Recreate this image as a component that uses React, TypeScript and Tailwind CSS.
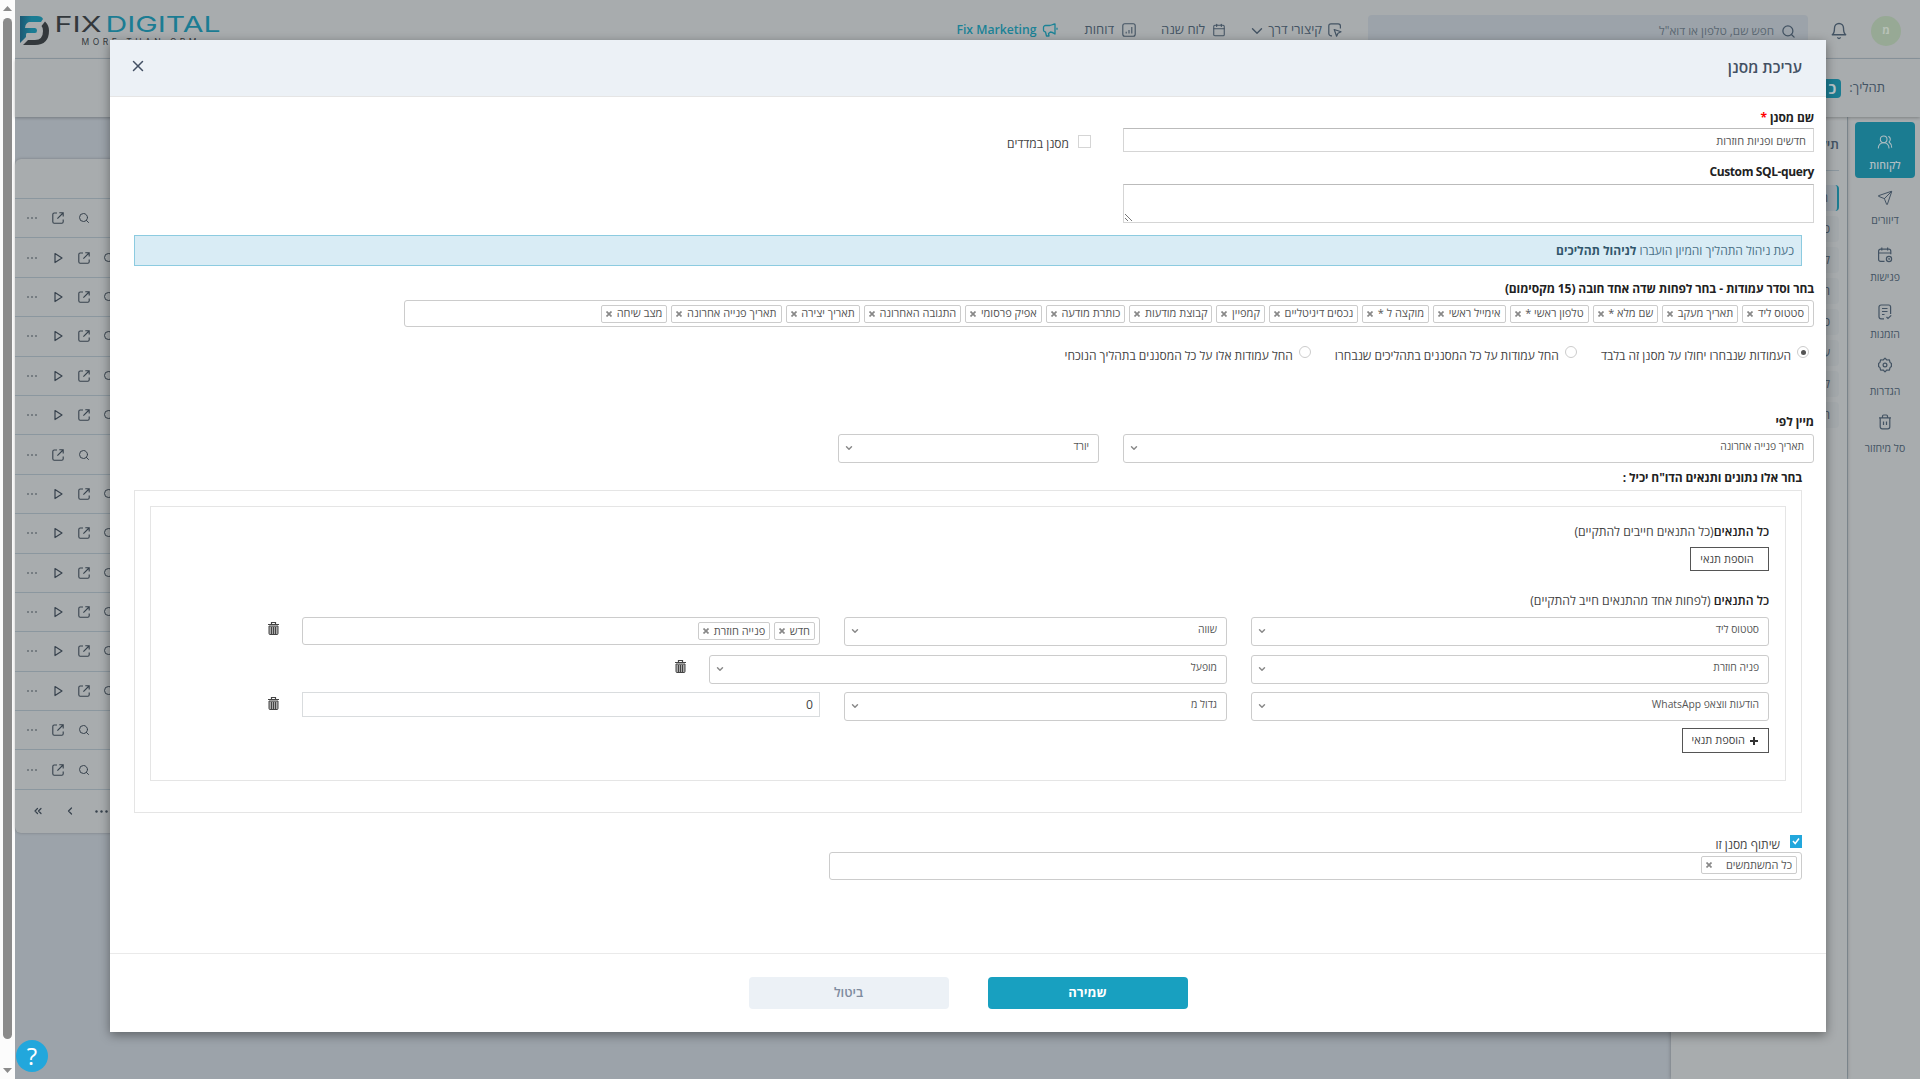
import clsx from "clsx";
import {
  LuBell,
  LuCalendar,
  LuChevronDown,
  LuChevronLeft,
  LuChevronsLeft,
  LuPlay,
  LuSearch,
  LuSend,
  LuUsersRound,
  LuX,
} from "react-icons/lu";

const columns = [
  "סטטוס ליד",
  "תאריך מעקב",
  "שם מלא *",
  "טלפון ראשי *",
  "אימייל ראשי",
  "מוקצה ל *",
  "נכסים דיגיטליים",
  "קמפיין",
  "קבוצת מודעות",
  "כותרת מודעה",
  "אפיק פרסומי",
  "התגובה האחרונה",
  "תאריך יצירה",
  "תאריך פנייה אחרונה",
  "מצב שיחה",
];

const rows = [false, true, true, true, true, true, false, true, true, true, true, true, true, false, false];

const stages = ["ח", "כ", "ל", "ח", "כ", "ע", "ל", "ח"];

function ExternalIcon() {
  return (
    <svg viewBox="0 0 12 12" className="size-3 shrink-0" fill="none" stroke="currentColor" strokeWidth="1.1">
      <path d="M5 1H2.2A1.4 1.4 0 0 0 .8 2.400V9.800A1.400 1.400 0 0 0 2.200 11.200H9.800A1.400 1.400 0 0 0 11.200 9.800V7.400M7.300.8h3.900v3.600M11 1 5.400 6.600" />
    </svg>
  );
}

function ChartIcon() {
  return (
    <svg viewBox="0 0 14 14" className="size-[14px]" fill="none" stroke="currentColor" strokeWidth="1.1">
      <rect x="0.800" y="0.800" width="12.400" height="12.400" rx="2" />
      <path d="M4.200 10.500V8.800M7 10.500V7M9.800 10.500V4" />
    </svg>
  );
}

function ShortcutIcon() {
  return (
    <svg viewBox="0 0 14 14" className="size-[14px]" fill="none" stroke="currentColor" strokeWidth="1.200" strokeLinejoin="round">
      <path d="M4 12.800H3a2.200 2.200 0 0 1-2.200-2.200V3A2.200 2.200 0 0 1 3 .8h7.200A2.200 2.200 0 0 1 12.400 3v2.500" />
      <path d="m6.200 6.500 6.800 2.200-3 1.500-1.400 3z" />
    </svg>
  );
}

function HornIcon() {
  return (
    <svg viewBox="0 0 16 14" className="h-[14px] w-4" fill="none" stroke="currentColor" strokeWidth="1.300" strokeLinejoin="round">
      <path d="M13 1v10C11 9.500 10.500 9 8.500 9L6.500 10.500 7 13H4.500L3.500 9A2 2 0 0 1 1.500 7V4.500a2 2 0 0 1 2-2h4C9.500 2.500 11 1 13 1zM15 4.800v2" />
    </svg>
  );
}

function MeetingIcon() {
  return (
    <svg viewBox="0 0 16 16" className="size-4" fill="none" stroke="currentColor" strokeWidth="1.200">
      <path d="M7.500 14.400H3.600a2 2 0 0 1-2-2V4.200a2 2 0 0 1 2-2h8.200a2 2 0 0 1 2 2v3M1.600 6h12.200M4.800.6v3M10.600.6v3" />
      <circle cx="12" cy="12" r="2.600" />
      <path d="M12 11v1.200h.8" />
    </svg>
  );
}

function OrdersIcon() {
  return (
    <svg viewBox="0 0 16 16" className="size-4" fill="none" stroke="currentColor" strokeWidth="1.200">
      <path d="M7 14.800H4a2 2 0 0 1-2-2V3a2 2 0 0 1 2-2h7.600a2 2 0 0 1 2 2v7M5 4.500h5.500M5 7.500h5.500M5 10.500h2.500M9.500 13l1.500 1.500 3.200-3.200" />
    </svg>
  );
}

function SettingsIcon() {
  return (
    <svg viewBox="0 0 16 16" className="size-4" fill="none" stroke="currentColor" strokeWidth="1.200" strokeLinejoin="round">
      <path d="M8 1.200 9.800 3 12.400 2.800 13 5.400 14.400 6.500V9.500L13 10.600 12.400 13.200 9.800 13 8 14.800 6.200 13 3.600 13.200 3 10.600 1.600 9.500V6.500L3 5.400 3.600 2.800 6.200 3z" />
      <circle cx="8" cy="8" r="1.900" />
    </svg>
  );
}

function BinIcon() {
  return (
    <svg viewBox="0 0 16 16" className="size-4" fill="none" stroke="currentColor" strokeWidth="1.200">
      <path d="M2 3.800h12M3.200 3.800v9a2 2 0 0 0 2 2h5.600a2 2 0 0 0 2-2v-9M5.500 3.600V2.200A1.200 1.200 0 0 1 6.700 1h2.600a1.200 1.200 0 0 1 1.200 1.200v1.400M6.500 7.500v3.500M9.500 7.500v3.500" />
    </svg>
  );
}

const menu = [
  { label: "דיוורים", icon: <LuSend className="size-4" strokeWidth={1.5} /> },
  { label: "פגישות", icon: <MeetingIcon /> },
  { label: "הזמנות", icon: <OrdersIcon /> },
  { label: "הגדרות", icon: <SettingsIcon />, raised: true },
  { label: "סל מיחזור", icon: <BinIcon />, raised: true },
];

function Logo() {
  return (
    <svg width="210" height="32" viewBox="0 0 210 32" direction="ltr" className="overflow-visible">
      <defs>
        <linearGradient id="mark" x1="0" x2="1">
          <stop offset="0" stopColor="#1c5873" />
          <stop offset="0.500" stopColor="#1b7c93" />
        </linearGradient>
      </defs>
      <path d="M0 0h17q5 0 6 3l-2 3H9.500Q7 6 5.500 9.500L5 12h10q2 0 2 2.500T15 17H7q-1 0-1 2v2L0 27z" fill="url(#mark)" />
      <path d="M25 5.500q4 4 4 9 0 14.500-14 14.500H3l5-5h7q8 0 8-9 0-3.500-1.500-5z" fill="#33383c" />
      <text x="34.500" y="16" textLength="47" lengthAdjust="spacingAndGlyphs" fontFamily="Inter" fontSize="22" fill="#33383c">FIX</text>
      <text x="85.500" y="16" textLength="115" lengthAdjust="spacingAndGlyphs" fontFamily="Inter" fontSize="22" fill="#1b7c93">DIGITAL</text>
      <text x="61.500" y="29" textLength="115" fontFamily="Inter" fontSize="8.500" fill="#33383c">MORE THAN CRM</text>
    </svg>
  );
}

function Tag({ text, wide }: { text: string; wide?: boolean }) {
  return (
    <span className={clsx("flex h-[18px] shrink-0 items-center rounded-[2px] border border-[#ccc] bg-white px-1 text-[11px] text-[#555]", wide ? "gap-[13.500px]" : "gap-[4.600px]")}>
      {text}
      <svg viewBox="0 0 6 6" className="size-[6px]" stroke="#888" strokeWidth="1.700">
        <path d="M.5.5l5 5M5.500.5l-5 5" />
      </svg>
    </span>
  );
}

function Select({ text, className }: { text: string; className?: string }) {
  return (
    <div className={clsx("flex h-[29px] items-center justify-between rounded-[3px] border border-[#ccc] bg-white pr-[9px] pl-[5px] pb-1 text-[10.300px] text-[#555]", className)}>
      <span>{text}</span>
      <LuChevronDown className="mt-[2px] size-[10px] text-[#888]" strokeWidth={3.4} />
    </div>
  );
}

function Radio({ text, checked, className }: { text: string; checked?: boolean; className?: string }) {
  return (
    <label className={clsx("flex shrink-0 gap-[6px]", className)}>
      <span className="flex size-3 items-center justify-center rounded-full border border-[#ccc]">
        {checked && <span className="size-[5px] rounded-full bg-[#555]" />}
      </span>
      <span className="leading-[19px]">{text}</span>
    </label>
  );
}

function Trash() {
  return (
    <svg viewBox="0 0 11 13" className="mr-[23px] mt-[5px] h-[13px] w-[11px] shrink-0" fill="none" stroke="#444">
      <path d="M3.500 2V.5h4V2M0 2.500h11" strokeWidth="1.200" />
      <path d="M1 4h9v7.500q0 1-1 1H2q-1 0-1-1zM3.500 5v7M5.500 5v7M7.500 5v7" strokeWidth="1" fill="#aaa" />
    </svg>
  );
}

function Background() {
  return (
    <div className="flex h-full flex-col bg-[#9ca3aa] text-[#435363]">
      <header className="flex h-[59px] shrink-0 border-b border-[#8b979f] bg-[#a8acae] text-[13px]">
        <div className="mr-[19px] flex items-center pt-[3px]">
          <span className="flex size-[30px] items-center justify-center rounded-full bg-[#97a995] text-[11px] font-bold text-[#b7c1b7]">מ</span>
          <LuBell className="mr-[23px] size-[18px]" strokeWidth={1.8} />
        </div>
        <div className="mt-[15px] mr-[22px] flex h-[32px] w-[440px] items-center rounded bg-[#9ca3aa] pr-3 text-[11.700px] text-[#5b6872]">
          <LuSearch className="ml-[7px] size-[15px] text-[#435363]" strokeWidth={2} />
          חפש שם, טלפון או דוא"ל
        </div>
        <nav className="mt-[15px] mr-[26px] flex h-[30px] items-center">
          <ShortcutIcon />
          <span className="mr-[6px]">קיצורי דרך</span>
          <LuChevronDown className="mt-[2px] mr-[2px] size-[18px]" strokeWidth={1.8} />
          <LuCalendar className="mr-[22px] size-[14px]" strokeWidth={1.8} />
          <span className="mr-[7px]">לוח שנה</span>
          <span className="mr-[25px]"><ChartIcon /></span>
          <span className="mr-[8px]">דוחות</span>
          <span className="mr-[26px] flex items-center gap-[6px] font-semibold text-[#1b8296]">
            <HornIcon />
            <span dir="ltr" className="text-[12.200px]">Fix Marketing</span>
          </span>
        </nav>
        <div className="mt-4 mr-auto ml-[5px] w-[210px]" dir="ltr"><Logo /></div>
      </header>
      <div className="relative flex h-[58px] shrink-0 items-center bg-[#a8acae] pr-[35px] text-[13px] shadow-[0_1px_3px_rgba(0,0,0,0.25)]">
        <span>תהליך:</span>
        <span className="mr-[8px] h-[19px] w-[60px] rounded bg-[#1b7c91] pr-[5px] text-[15px] font-bold leading-[18px] text-[#b5c3c8]">כ</span>
      </div>
      <div className="flex min-h-0 grow">
        <aside className="flex w-[73px] flex-col border-l border-[#8b979f] bg-[#a8acae] pt-[5px] pr-[5px] text-[10.500px]">
          <div className="flex h-14 w-[60px] flex-col items-center rounded bg-[#1b7c91] pt-3 font-semibold text-[#aebdc2]">
            <LuUsersRound className="size-4" strokeWidth={1.6} />
            <span className="mt-[7px] leading-4">לקוחות</span>
          </div>
          <div className="flex w-[60px] flex-col pt-3">
            {menu.map((item) => (
              <div key={item.label} className="flex h-[57px] flex-col items-center">
                <span className={item.raised ? "-mt-1 mb-1" : ""}>{item.icon}</span>
                <span className="mt-[6px] leading-4">{item.label}</span>
              </div>
            ))}
          </div>
        </aside>
        <aside className="w-[176px] bg-[#a8acae] pr-2 shadow-[0_0_4px_rgba(0,0,0,0.3)]">
          <div className="h-[54px] border-b border-[#8b979f] pt-[17px] text-[13px] font-semibold leading-[20px]">תיקיות</div>
          <div className="flex flex-col gap-[5px] pt-[14px] text-[12px]">
            {stages.map((name, i) => (
              <div key={i} className={clsx("h-[26px] rounded pr-[9px] leading-[26px]", i === 0 ? "border-r-2 border-[#1b7c91] bg-[#9ca3aa]" : "bg-[#a3a8ab]")}>
                {name}
              </div>
            ))}
          </div>
        </aside>
        <main className="grow pt-[42px]">
          <div className="h-[674px] rounded-md bg-[#a8acae] shadow-[0_0_3px_rgba(0,0,0,0.25)]" dir="ltr">
            <div className="h-10 border-b border-[#8b979f]" />
            {rows.map((play, i) => (
              <div key={i} className="flex h-[39.400px] items-center gap-[13px] border-b border-[#8b979f] pl-3 text-[#37424d] last-of-type:border-b-0">
                <svg viewBox="0 0 10 2" className="h-[2px] w-[10px]" fill="currentColor">
                  <circle cx="1" cy="1" r="0.800" /><circle cx="5" cy="1" r="0.800" /><circle cx="9" cy="1" r="0.800" />
                </svg>
                <span className="ml-[2px] flex items-center gap-[13.500px]">
                  {play && <LuPlay className="size-3" strokeWidth={2.4} />}
                  <ExternalIcon />
                  <LuSearch className="size-3" strokeWidth={2} />
                </span>
              </div>
            ))}
            <div className="flex h-[43px] items-center pl-[17px] text-[#37424d]">
              <LuChevronsLeft className="size-3" strokeWidth={2.400} />
              <LuChevronLeft className="ml-[20px] size-3" strokeWidth={2.400} />
              <svg viewBox="0 0 13 3" className="ml-[19px] h-[3px] w-[13px]" fill="currentColor">
                <circle cx="1.500" cy="1.500" r="1.200" /><circle cx="6.500" cy="1.500" r="1.200" /><circle cx="11.500" cy="1.500" r="1.200" />
              </svg>
            </div>
          </div>
        </main>
      </div>
    </div>
  );
}

function Conditions() {
  return (
    <div className="mt-[15px] mr-[15px] h-[275px] w-[1636px] border border-[#e5e5e5] pt-[14px] pr-4 text-[12.200px]">
      <div className="h-5 leading-[21px]"><span className="font-semibold text-[#222]">כל התנאים</span>(כל התנאים חייבים להתקיים)</div>
      <button className="mt-[6px] block h-6 w-[79px] border border-[#555] pr-[5px] text-[11px]">הוספת תנאי</button>
      <div className="mt-[19px] h-5 leading-[21px]"><span className="font-semibold text-[#222]">כל התנאים</span> (לפחות אחד מהתנאים חייב להתקיים)</div>
      <div className="mt-[7px] flex h-[29px]">
        <Select text="סטטוס ליד" className="w-[518px]" />
        <Select text="שווה" className="mr-6 w-[383px]" />
        <div className="mr-6 flex h-[28px] w-[518px] items-center gap-[4px] rounded-[3px] border border-[#ccc] pr-1">
          <Tag text="חדש" />
          <Tag text="פנייה חוזרת" />
        </div>
        <Trash />
      </div>
      <div className="mt-[9px] flex h-[29px]">
        <Select text="פניה חוזרת" className="w-[518px]" />
        <Select text="מופעל" className="mr-6 w-[518px]" />
        <Trash />
      </div>
      <div className="mt-2 flex h-[29px]">
        <Select text="הודעות ווצאפ WhatsApp" className="w-[518px]" />
        <Select text="גדול מ" className="mr-6 w-[383px]" />
        <div className="mr-6 h-[25px] w-[518px] border border-[#d9dcde] pr-[6px] leading-[23px]">0</div>
        <Trash />
      </div>
      <button className="mt-[7px] flex h-[25px] w-[87px] items-center gap-[5px] border border-[#555] pr-[10px] text-[11px]">
        <svg viewBox="0 0 8 8" className="size-2" stroke="#333" strokeWidth="2"><path d="M4 0v8M0 4h8" /></svg>
        הוספת תנאי
      </button>
    </div>
  );
}

function FilterModal() {
  return (
    <div className="absolute top-10 left-[110px] z-10 flex h-[992px] w-[1716px] flex-col bg-white text-[12px] text-[#444] shadow-[0_3px_10px_rgba(0,0,0,0.4)]">
      <div className="flex h-[57px] shrink-0 items-center justify-between border-b border-[#e5e5e5] bg-[#ecf1f6] pr-6 pl-[19px]">
        <h1 className="text-[15.500px] font-semibold text-[#435063]">עריכת מסנן</h1>
        <LuX className="mb-1 size-[18px] text-[#435063]" strokeWidth={2} />
      </div>
      <div className="grow pt-[10px] pr-3">
        <div className="h-5 font-bold leading-[21px] tracking-[-0.1px] text-[#222]">שם מסנן <span className="text-[#f00]">*</span></div>
        <div className="mt-px flex h-6">
          <div className="w-[691px] border border-[#d5d5d5] border-t-[#bbb] pr-[7px] text-[11px] leading-[23px] text-[#555]">חדשים ופניות חוזרות</div>
          <span className="mt-[7px] mr-[32px] size-[13px] border border-[#d5d5d5]" />
          <span className="mt-[5px] mr-[9px] leading-[21px]">מסנן במדדים</span>
        </div>
        <div className="mt-[10px] h-5 font-bold leading-[20px] tracking-[-0.38px] text-[#222]">Custom SQL-query</div>
        <div className="mt-[2px] flex h-[39px] w-[691px] items-end justify-end border border-[#d5d5d5] border-t-[#bbb] pb-px">
          <svg viewBox="0 0 9 8" className="h-2 w-[9px]" stroke="#777"><path d="M1 1l7 7M1 5l3 3" /></svg>
        </div>
        <div className="mt-3 mr-3 h-[31px] w-[1668px] border border-[#8ccbe0] bg-[#d9ecf5] pr-[7px] leading-[29px] text-[#4a7086]">
          כעת ניהול התהליך והמיון הועברו <b className="text-[#31566b]">לניהול תהליכים</b>
        </div>
        <div className="mt-3 h-5 font-bold leading-[22px] tracking-[-0.1px] text-[#222]">בחר וסדר עמודות - בחר לפחות שדה אחד חובה (15 מקסימום)</div>
        <div className="mt-[2px] flex h-[27px] w-[1410px] items-center gap-[4px] rounded-[3px] border border-[#ccc] pr-1">
          {columns.map((name) => <Tag key={name} text={name} />)}
        </div>
        <div className="mt-[19px] mr-[5px] flex h-5">
          <Radio text="העמודות שנבחרו יחולו על מסנן זה בלבד" checked />
          <Radio text="החל עמודות על כל המסננים בתהליכים שנבחרו" className="mr-6" />
          <Radio text="החל עמודות אלו על כל המסננים בתהליך הנוכחי" className="mr-6" />
        </div>
        <div className="mt-[46px] h-5 font-bold leading-[20px] tracking-[-0.1px] text-[#222]">מיין לפי</div>
        <div className="mt-[2px] flex">
          <Select text="תאריך פנייה אחרונה" className="w-[691px]" />
          <Select text="יורד" className="mr-6 w-[261px]" />
        </div>
        <div className="mt-[5px] mr-3 h-5 font-bold leading-[20px] tracking-[-0.1px] text-[#222]">בחר אלו נתונים ותנאים הדו"ח יכיל :</div>
        <div className="mt-[2px] mr-3 h-[323px] w-[1668px] border border-[#e5e5e5]"><Conditions /></div>
        <div className="mt-[21px] mr-3 flex h-[18px] gap-[10px]">
          <svg viewBox="0 0 12 13" className="mt-px h-[13px] w-3" fill="none" stroke="#fff" strokeWidth="1.500">
            <rect width="12" height="13" fill="#22a7dc" stroke="none" />
            <path d="m3 6 2.200 2.500L9 3.500" />
          </svg>
          <span className="leading-[21px]">שיתוף מסנן זו</span>
        </div>
        <div className="mr-3 flex h-7 w-[973px] items-center rounded-[3px] border border-[#ccc] pr-1 pb-[2px]">
          <Tag text="כל המשתמשים" wide />
        </div>
      </div>
      <div className="flex h-[79px] shrink-0 justify-center gap-[39px] border-t border-[#eaeaea] pt-[23px] text-[13px]">
        <button className="h-8 w-[200px] rounded bg-[#18a0c0] font-bold text-white">שמירה</button>
        <button className="h-8 w-[200px] rounded bg-[#ecf1f6] font-semibold text-[#7f8c9f]">ביטול</button>
      </div>
    </div>
  );
}

export default function App() {
  return (
    <div dir="ltr" className="flex h-[1079px] w-[1920px] overflow-hidden font-['Open_Sans',sans-serif]">
      <div className="flex w-[15px] shrink-0 flex-col items-center bg-[#fcfcfc]">
        <svg viewBox="0 0 9 5" className="mt-[6px] h-[5px] w-[9px]" fill="#8b8b8b"><path d="M0 5 4.500 0 9 5z" /></svg>
        <div className="mt-[7px] h-[1021px] w-[9px] rounded-full bg-[#8b8b8b]" />
        <svg viewBox="0 0 9 5" className="mt-[29px] h-[5px] w-[9px]" fill="#8b8b8b"><path d="M0 0 4.500 5 9 0z" /></svg>
      </div>
      <div dir="rtl" className="min-w-0 grow">
        <Background />
        <FilterModal />
        <div className="absolute top-[1040px] left-4 flex size-8 items-center justify-center rounded-full bg-[#22a7dc] text-[24px] text-white">?</div>
      </div>
    </div>
  );
}
